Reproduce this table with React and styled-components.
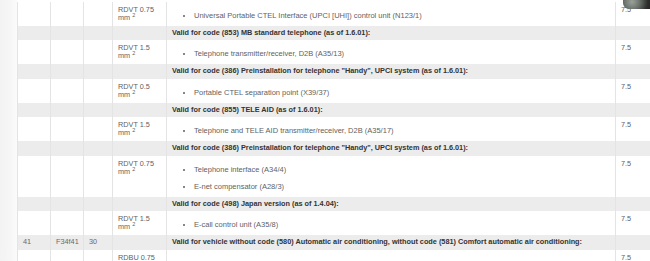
import React from "react";
import styled, { createGlobalStyle } from "styled-components";

const GlobalStyle = createGlobalStyle`
  html, body {
    margin: 0;
    padding: 0;
    background: #ffffff;
    overflow: hidden;
  }
  body {
    font-family: "Liberation Sans", Arial, sans-serif;
  }
`;

const Page = styled.div`
  position: relative;
  width: 650px;
  height: 261px;
  overflow: hidden;
  display: flex;
  background: #ffffff;
`;

const Gutter = styled.div`
  width: 17px;
  flex: none;
  background: linear-gradient(to right, #f3f3f3 0%, #f6f6f6 60%, #fbfbfb 100%);
`;

const Table = styled.table`
  flex: none;
  align-self: flex-start;
  width: 680px;
  margin-top: 1.5px;
  border-collapse: collapse;
  table-layout: fixed;
  font-size: 7.3px;
  line-height: 8px;
  color: #5f5f5f;
`;

const Row = styled.tr`
  background: ${(p) => (p.$head ? "#ececec" : "#ffffff")};
`;

const Cell = styled.td`
  vertical-align: top;
  padding: ${(p) => (p.$head ? "3px 5px 3.5px" : "4px 5px 4px")};
  border-left: 1px solid #e4e4e4;
  border-right: 1px solid #e4e4e4;
  overflow: hidden;
  white-space: nowrap;
  color: ${(p) => (p.$head ? "#6a6a6a" : "#5f5f5f")};
`;

const HeadText = styled.td`
  vertical-align: top;
  padding: 3px 5px 3.5px;
  border-left: 1px solid #e4e4e4;
  border-right: 1px solid #e4e4e4;
  font-weight: bold;
  color: #333333;
  white-space: nowrap;
`;

const Sup = styled.sup`
  font-size: 5.5px;
  line-height: 0;
  vertical-align: 3px;
`;

const List = styled.ul`
  margin: 6px 0 2px;
  padding-left: 22px;
  list-style: disc;
  font-size: 7.5px;
`;

const Item = styled.li`
  white-space: nowrap;
  & + & {
    margin-top: 9px;
  }
`;

const Thumb = styled.div`
  position: absolute;
  top: 0;
  left: 623px;
  width: 30px;
  height: 9px;
  border-bottom-left-radius: 6px;
  background: radial-gradient(circle at 30% 20%, #9aa29a 0%, #6b726b 35%, #2e302e 70%, #1d1e1d 100%);
`;

const rows = [
  { wire: "RDVT 0.75", items: ["Universal Portable CTEL Interface (UPCI [UHI]) control unit (N123/1)"] },
  { head: "Valid for code (853) MB standard telephone (as of 1.6.01):" },
  { wire: "RDVT 1.5", items: ["Telephone transmitter/receiver, D2B (A35/13)"] },
  { head: 'Valid for code (386) Preinstallation for telephone "Handy", UPCI system (as of 1.6.01):' },
  { wire: "RDVT 0.5", items: ["Portable CTEL separation point (X39/37)"] },
  { head: "Valid for code (855) TELE AID (as of 1.6.01):" },
  { wire: "RDVT 1.5", items: ["Telephone and TELE AID transmitter/receiver, D2B (A35/17)"] },
  { head: 'Valid for code (386) Preinstallation for telephone "Handy", UPCI system (as of 1.6.01):' },
  { wire: "RDVT 0.75", items: ["Telephone interface (A34/4)", "E-net compensator (A28/3)"] },
  { head: "Valid for code (498) Japan version (as of 1.4.04):" },
  { wire: "RDVT 1.5", items: ["E-call control unit (A35/8)"] },
  {
    head: "Valid for vehicle without code (580) Automatic air conditioning, without code (581) Comfort automatic air conditioning:",
    pin: "41",
    fuse: "F34f41",
    amp: "30",
  },
  { wire: "RDBU 0.75", items: ["Heater/AC blower regulator (A32n1)"] },
];

function App() {
  return (
    <Page>
      <GlobalStyle />
      <Gutter />
      <Table>
        <colgroup>
          <col style={{ width: 33 }} />
          <col style={{ width: 33 }} />
          <col style={{ width: 29 }} />
          <col style={{ width: 54 }} />
          <col style={{ width: 449 }} />
          <col style={{ width: 82 }} />
        </colgroup>
        <tbody>
          {rows.map((r, i) =>
            r.head ? (
              <Row key={i} $head>
                <Cell $head>{r.pin || ""}</Cell>
                <Cell $head>{r.fuse || ""}</Cell>
                <Cell $head>{r.amp || ""}</Cell>
                <Cell $head />
                <HeadText>{r.head}</HeadText>
                <Cell $head />
              </Row>
            ) : (
              <Row key={i}>
                <Cell />
                <Cell />
                <Cell />
                <Cell>
                  {r.wire}
                  <br />
                  mm <Sup>2</Sup>
                </Cell>
                <Cell>
                  <List>
                    {r.items.map((it) => (
                      <Item key={it}>{it}</Item>
                    ))}
                  </List>
                </Cell>
                <Cell>7.5</Cell>
              </Row>
            )
          )}
        </tbody>
      </Table>
      <Thumb />
    </Page>
  );
}

export default App;
